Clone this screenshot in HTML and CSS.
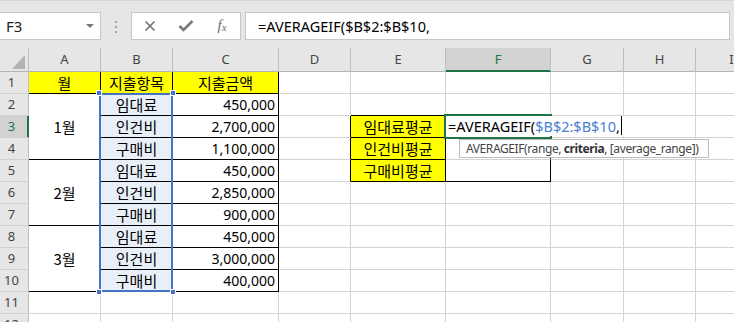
FILE: index.html
```html
<!DOCTYPE html>
<html lang="ko">
<head>
    <meta charset="UTF-8">
    <meta name="viewport" content="width=device-width, initial-scale=1.0">
    <title>AVERAGEIF</title>
    <link rel="stylesheet" href="styles.css">
</head>
<body>
    <div class="toolbar">
        <div class="name-box">F3<span class="drop"></span></div>
        <svg class="grip" width="4" height="12" viewBox="0 0 4 12">
            <rect x="1" y="0" width="2" height="2" fill="#a6a6a6"/>
            <rect x="1" y="5" width="2" height="2" fill="#a6a6a6"/>
            <rect x="1" y="10" width="2" height="2" fill="#a6a6a6"/>
        </svg>
        <div class="fx-buttons">
            <span class="btn">
                <svg width="12" height="12" viewBox="0 0 12 12">
                    <path d="M1.5 1.5 L10.5 10.5 M10.5 1.5 L1.5 10.5" stroke="#707070" stroke-width="1.6" fill="none"/>
                </svg>
            </span>
            <span class="btn">
                <svg width="16" height="12" viewBox="0 0 16 12">
                    <path d="M1.5 6 L5.5 10 L14.5 1" stroke="#7a7a7a" stroke-width="2.6" fill="none"/>
                </svg>
            </span>
            <span class="btn fx"><i>f</i><i class="x">x</i></span>
        </div>
        <div class="formula">=AVERAGEIF($B$2:$B$10,</div>
    </div>

    <div class="sheet">
        <div class="hd corner"></div>
        <div class="hd">A</div>
        <div class="hd">B</div>
        <div class="hd">C</div>
        <div class="hd">D</div>
        <div class="hd">E</div>
        <div class="hd on">F</div>
        <div class="hd">G</div>
        <div class="hd">H</div>
        <div class="hd">I</div>

        <!-- row 1 -->
        <div class="rh">1</div>
        <div class="c y r b">월</div>
        <div class="c y r b">지출항목</div>
        <div class="c y r b">지출금액</div>
        <div class="c"></div><div class="c"></div><div class="c"></div><div class="c"></div><div class="c"></div><div class="c"></div>

        <!-- row 2 -->
        <div class="rh">2</div>
        <div class="c m3 r b">1월</div>
        <div class="c sel r b">임대료</div>
        <div class="c num r b">450,000</div>
        <div class="c"></div>
        <div class="c b"></div>
        <div class="c b"></div>
        <div class="c"></div><div class="c"></div><div class="c"></div>

        <!-- row 3 -->
        <div class="rh on">3</div>
        <div class="c sel r b">인건비</div>
        <div class="c num r b">2,700,000</div>
        <div class="c r"></div>
        <div class="c y r b">임대료평균</div>
        <div class="c r"></div>
        <div class="c"></div><div class="c"></div><div class="c"></div>

        <!-- row 4 -->
        <div class="rh">4</div>
        <div class="c sel r b">구매비</div>
        <div class="c num r b">1,100,000</div>
        <div class="c r"></div>
        <div class="c y r b">인건비평균</div>
        <div class="c r"></div>
        <div class="c"></div><div class="c"></div><div class="c"></div>

        <!-- row 5 -->
        <div class="rh">5</div>
        <div class="c m3 r b">2월</div>
        <div class="c sel r b">임대료</div>
        <div class="c num r b">450,000</div>
        <div class="c r"></div>
        <div class="c y r b">구매비평균</div>
        <div class="c r b"></div>
        <div class="c"></div><div class="c"></div><div class="c"></div>

        <!-- row 6 -->
        <div class="rh">6</div>
        <div class="c sel r b">인건비</div>
        <div class="c num r b">2,850,000</div>
        <div class="c"></div><div class="c"></div><div class="c"></div><div class="c"></div><div class="c"></div><div class="c"></div>

        <!-- row 7 -->
        <div class="rh">7</div>
        <div class="c sel r b">구매비</div>
        <div class="c num r b">900,000</div>
        <div class="c"></div><div class="c"></div><div class="c"></div><div class="c"></div><div class="c"></div><div class="c"></div>

        <!-- row 8 -->
        <div class="rh">8</div>
        <div class="c m3 r b">3월</div>
        <div class="c sel r b">임대료</div>
        <div class="c num r b">450,000</div>
        <div class="c"></div><div class="c"></div><div class="c"></div><div class="c"></div><div class="c"></div><div class="c"></div>

        <!-- row 9 -->
        <div class="rh">9</div>
        <div class="c sel r b">인건비</div>
        <div class="c num r b">3,000,000</div>
        <div class="c"></div><div class="c"></div><div class="c"></div><div class="c"></div><div class="c"></div><div class="c"></div>

        <!-- row 10 -->
        <div class="rh">10</div>
        <div class="c sel r b">구매비</div>
        <div class="c num r b">400,000</div>
        <div class="c"></div><div class="c"></div><div class="c"></div><div class="c"></div><div class="c"></div><div class="c"></div>

        <!-- row 11 -->
        <div class="rh">11</div>
        <div class="c"></div><div class="c"></div><div class="c"></div><div class="c"></div><div class="c"></div><div class="c"></div><div class="c"></div><div class="c"></div><div class="c"></div>

        <!-- row 12 -->
        <div class="rh">12</div>
        <div class="c"></div><div class="c"></div><div class="c"></div><div class="c"></div><div class="c"></div><div class="c"></div><div class="c"></div><div class="c"></div><div class="c"></div>

        <!-- range reference B2:B10 -->
        <div class="ref-range">
            <span class="handle tl"></span>
            <span class="handle tr"></span>
            <span class="handle bl"></span>
            <span class="handle br"></span>
        </div>

        <!-- active cell F3 in edit mode -->
        <div class="active-cell"></div>
        <div class="editor">=AVERAGEIF(<span class="ref">$B$2:$B$10</span>,<span class="caret"></span></div>
        <div class="tip">AVERAGEIF(range, <b>criteria</b>, [average_range])</div>
    </div>
</body>
</html>
```

FILE: styles.css
```css
:root {
    --grid-color: #d4d4d4;
    --header-bg: #e6e6e6;
    --header-line: #bfbfbf;
    --excel-green: #217346;
    --ref-blue: #4472c4;
}

body {
    margin: 0;
    width: 734px;
    height: 322px;
    overflow: hidden;
    background: #fff;
    font-family: "Noto Sans", "Noto Sans CJK KR", sans-serif;
    color: #000;
}

/* formula bar */
.toolbar {
    display: flex;
    align-items: flex-start;
    height: 48px;
    padding-top: 11px;
    box-sizing: border-box;
    background: #e6e6e6;
    border-top: 1px solid #d6d6d6;
}

.name-box {
    position: relative;
    width: 101px;
    height: 28px;
    box-sizing: border-box;
    padding-left: 6px;
    background: #fff;
    border: 1px solid #c6c6c6;
    border-left: none;
    font-size: 15px;
    line-height: 26px;
    color: #222;
}

.drop {
    position: absolute;
    right: 6px;
    top: 11px;
    border-left: 4px solid transparent;
    border-right: 4px solid transparent;
    border-top: 4px solid #777;
}

.grip {
    margin-left: 13px;
    margin-top: 9px;
}

.fx-buttons {
    display: flex;
    margin-left: 13px;
    width: 110px;
    height: 28px;
    box-sizing: border-box;
    background: #fff;
    border: 1px solid #c6c6c6;
}

.btn {
    width: 36px;
    display: flex;
    align-items: center;
    justify-content: center;
}

.fx {
    font-family: "Liberation Serif", serif;
    font-size: 15px;
    color: #6a6a6a;
    padding-bottom: 2px;
}

.fx .x {
    font-size: 11px;
    margin-top: 4px;
}

.formula {
    margin-left: 4px;
    width: 485px;
    height: 28px;
    box-sizing: border-box;
    padding-left: 12px;
    background: #fff;
    border: 1px solid #c6c6c6;
    font-size: 14.5px;
    line-height: 26px;
}

/* worksheet */
.sheet {
    position: relative;
    display: grid;
    grid-template-columns: 29px 72px 72px 106px 72px 95px 105px 73px 72px 72px;
    grid-template-rows: 24px repeat(12, 22px);
}

.hd {
    background: var(--header-bg);
    border-right: 1px solid var(--header-line);
    border-bottom: 1px solid #b5b5b5;
    font-size: 13px;
    line-height: 23px;
    text-align: center;
    color: #444;
}

.hd.on {
    background: #d2d2d2;
    color: var(--excel-green);
    border-bottom-color: var(--excel-green);
    box-shadow: inset 0 -1px 0 var(--excel-green);
}

.corner {
    position: relative;
}

.corner::after {
    content: "";
    position: absolute;
    right: 3px;
    bottom: 2px;
    width: 13px;
    height: 14px;
    background: #b4b4b4;
    clip-path: polygon(100% 0, 100% 100%, 0 100%);
}

.rh {
    background: var(--header-bg);
    border-right: 1px solid var(--header-line);
    border-bottom: 1px solid #d0d0d0;
    padding-right: 5px;
    font-size: 13px;
    line-height: 21px;
    text-align: center;
    color: #444;
}

.rh.on {
    background: #d2d2d2;
    color: var(--excel-green);
    border-right-color: var(--excel-green);
    box-shadow: inset -1px 0 0 var(--excel-green);
}

.c {
    border-right: 1px solid var(--grid-color);
    border-bottom: 1px solid var(--grid-color);
    font-family: "Noto Sans CJK KR", sans-serif;
    font-size: 15px;
    line-height: 21px;
    text-align: center;
    white-space: nowrap;
    overflow: hidden;
}

.y {
    background: #ffff00;
}

.sel {
    background: #e9eff8;
}

.r {
    border-right-color: #000;
}

.b {
    border-bottom-color: #000;
}

.m3 {
    grid-row: span 3;
    display: flex;
    align-items: center;
    justify-content: center;
}

.num {
    text-align: right;
    padding-right: 3px;
    font-family: "Noto Sans", sans-serif;
    font-size: 14px;
}

/* overlays */
.ref-range {
    position: absolute;
    left: 99px;
    top: 45px;
    width: 74px;
    height: 199px;
    box-sizing: border-box;
    border: 2px solid var(--ref-blue);
}

.handle {
    position: absolute;
    width: 4px;
    height: 4px;
    background: var(--ref-blue);
    border: 1px solid #fff;
}

.handle.tl { left: -5px; top: -5px; }
.handle.tr { right: -5px; top: -5px; }
.handle.bl { left: -5px; bottom: -5px; }
.handle.br { right: -5px; bottom: -5px; }

.active-cell {
    position: absolute;
    left: 444px;
    top: 66px;
    width: 108px;
    height: 25px;
    box-sizing: border-box;
    border: 2px solid var(--excel-green);
}

.editor {
    position: absolute;
    left: 446px;
    top: 68px;
    height: 20px;
    padding: 0 2px 0 2px;
    background: #fff;
    font-size: 14.5px;
    line-height: 20px;
    white-space: nowrap;
}

.editor .ref {
    color: #4a7dd0;
}

.caret {
    display: inline-block;
    width: 1px;
    height: 19px;
    margin-left: 1px;
    vertical-align: top;
    background: #000;
}

.tip {
    position: absolute;
    left: 459px;
    top: 91px;
    width: 250px;
    height: 19px;
    box-sizing: border-box;
    padding-left: 6px;
    background: #fff;
    border: 1px solid #bdbdbd;
    font-size: 12px;
    letter-spacing: -0.4px;
    line-height: 17px;
    color: #444;
    white-space: nowrap;
}

.tip b {
    color: #333;
}
```
